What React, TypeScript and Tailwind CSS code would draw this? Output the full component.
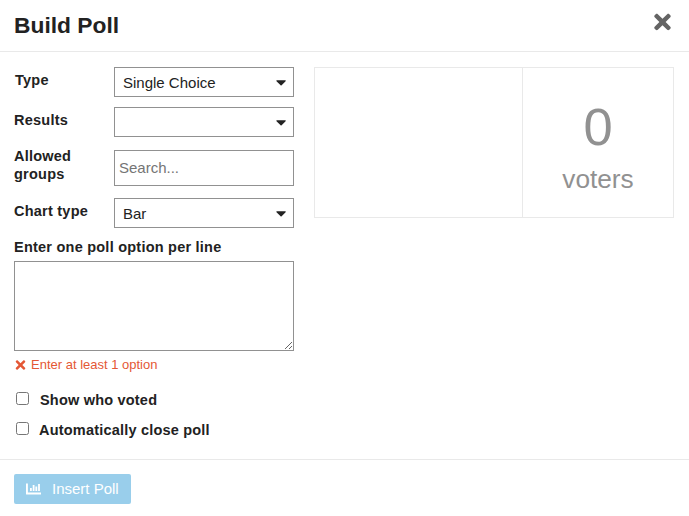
import { FaTimes } from "react-icons/fa";

const Caret = () => {
  return (
    <svg width="10" height="6" viewBox="0 0 10 6" fill="currentColor">
      <path d="M1 .3h8.2c.5 0 .7.6.4.9L5.6 5.3c-.3.3-.7.3-1 0L.5 1.2C.2.9.5.3 1 .3z" />
    </svg>
  );
};

const ChartIcon = () => {
  return (
    <svg className="mr-[11px]" width="15" height="12" viewBox="0 0 15 12" fill="currentColor">
      <path d="M0 0.5h1.9v9.1H15v1.9H.6a.6.6 0 0 1-.6-.6z" />
      <path d="M4 5h1.8v3H4zM6.7 2h1.8v6H6.7zM9.4 3.6h1.8V8H9.4zM12.1 1h1.8v7h-1.8z" />
    </svg>
  );
};

const Select = ({ value }: { value?: string }) => {
  return (
    <div className="w-[180px] h-[30px] border border-[#919191] flex items-center justify-between pl-2 pr-[7px]">
      <span className="pt-px">{value}</span>
      <div className="pt-0.5">
        <Caret />
      </div>
    </div>
  );
};

const labelClass = "w-[100px] font-bold leading-[18px] text-[14.5px] tracking-[0.23px]";

const App = () => {
  return (
    <div className="w-[689px] h-[516px] bg-white text-[#222222] text-[15px] leading-[18px] font-['Liberation_Sans',Arial,sans-serif] flex flex-col overflow-hidden">
      <div className="h-[52px] border-b border-[#e9e9e9] flex justify-between pl-[14px] pr-[16px]">
        <h3 className="text-[22.8px] leading-[28px] font-bold mt-[11px]">Build Poll</h3>
        <button className="h-[24px] mt-[10px] text-[#646464]">
          <FaTimes className="w-[21px] h-[24px]" />
        </button>
      </div>

      <div className="h-[407px] flex gap-5 pl-[14px] pt-[15px]">
        <div className="w-[280px]">
          <div className="flex h-[40px]">
            <label className={`${labelClass} pt-1 pl-px`}>Type</label>
            <Select value="Single Choice" />
          </div>
          <div className="flex h-[40px]">
            <label className={`${labelClass} pt-1`}>Results</label>
            <Select />
          </div>
          <div className="flex h-[51px]">
            <label className={`${labelClass} pr-8`}>Allowed groups</label>
            <input
              className="w-[180px] h-[36px] mt-[3px] px-1 pb-0.5 border border-[#919191] outline-none placeholder:text-[#757575]"
              placeholder="Search..."
            />
          </div>
          <div className="flex h-[40px]">
            <label className={`${labelClass} pt-1`}>Chart type</label>
            <Select value="Bar" />
          </div>
          <label className="block font-bold h-[23px] text-[14.5px] tracking-[0.23px]">
            Enter one poll option per line
          </label>
          <textarea className="block w-[280px] h-[90px] border border-[#919191] resize outline-none" />
          <div className="flex items-center h-[27px] text-[13px] text-[#e45735]">
            <FaTimes className="w-[13px] h-[14px] mr-1" />
            Enter at least 1 option
          </div>

          {/* options */}
          <label className="flex items-center h-[30px] mt-[7px] font-bold text-[14.5px] tracking-[0.2px]">
            <input type="checkbox" className="w-[13px] h-[13px] ml-0.5 mr-[11px] mb-[3px]" />
            Show who voted
          </label>
          <label className="flex items-center h-[30px] font-bold text-[14.5px] tracking-[0.2px]">
            <input type="checkbox" className="w-[13px] h-[13px] ml-0.5 mr-[10px] mb-[3px]" />
            Automatically close poll
          </label>
        </div>

        {/* poll preview */}
        <div className="w-[360px] h-[151px] border border-[#e9e9e9] flex text-[#919191]">
          <div className="w-[208px] border-r border-[#e9e9e9]"></div>
          <div className="flex-1 text-center pt-[31px]">
            <div className="text-[52.5px] leading-[56px]">0</div>
            <div className="text-[26.25px] leading-[32px] mt-[8px]">voters</div>
          </div>
        </div>
      </div>

      <div className="flex-1 border-t border-[#e9e9e9] pl-[14px] pt-[14px]">
        <button className="w-[117px] h-[30px] bg-[#99ceeb] text-white flex items-center pl-3 rounded-[2px]">
          <ChartIcon />
          Insert Poll
        </button>
      </div>
    </div>
  );
};

export default App;
